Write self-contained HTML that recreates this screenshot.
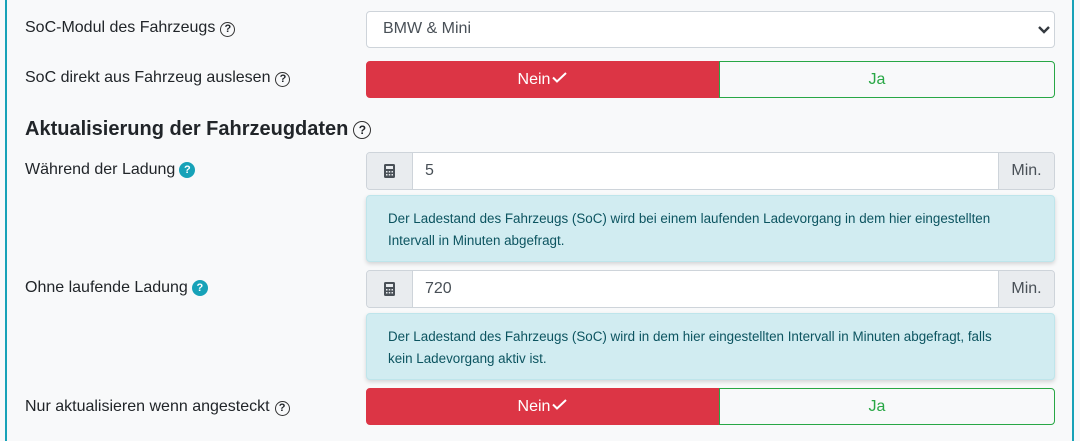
<!DOCTYPE html><html><head><style>
body{margin:0;width:1080px;height:441px;background:#f8f9fa;font-family:"Liberation Sans",sans-serif;color:#212529;position:relative;overflow:hidden}
.b{position:absolute;top:0;bottom:0;width:2px;background:#17a2b8}
.lbl{position:absolute;left:25px;font-size:16px}
.q{display:inline-block;width:13px;height:13px;border:1.8px solid #333;border-radius:50%;font-size:11px;font-weight:bold;text-align:center;line-height:13px;vertical-align:0px;margin-left:5px}
.qi{display:inline-block;width:16px;height:16px;background:#17a2b8;color:#fff;border-radius:50%;font-size:11px;font-weight:bold;text-align:center;line-height:16px;vertical-align:1px;margin-left:4px}
.box{position:absolute;left:366px;width:689px;box-sizing:border-box}
.sel{height:37px;top:11px;background:#fff;border:1px solid #ced4da;border-radius:4px;font-size:16px;padding:8px 16px;color:#495057}
.tog{height:37px;display:flex}
.tog div{text-align:center;line-height:35px;font-size:16px;box-sizing:border-box}
.no{width:353px;background:#dc3545;color:#fff;border:1px solid #dc3545;border-radius:4px 0 0 4px}
.ja{flex:1;border:1px solid #28a745;color:#28a745;border-radius:0 4px 4px 0;background:#f8f9fa;padding-right:20px}
.ig{height:38px;display:flex;border:1px solid #ced4da;border-radius:4px;overflow:hidden;font-size:16px}
.ig .a{width:45px;background:#e9ecef;border-right:1px solid #ced4da;display:flex;align-items:center;justify-content:center}
.ig .i{flex:1;background:#fff;padding:0 12px;line-height:36px;color:#495057}
.ig .m{width:55px;background:#e9ecef;border-left:1px solid #ced4da;text-align:center;line-height:36px;color:#495057}
.al{height:67px;background:#d1ecf1;border:1px solid #bee5eb;border-radius:4px;color:#0c5460;font-size:13.4px;line-height:22px;padding:12px 21px;box-shadow:0 2px 4px rgba(0,0,0,.15);white-space:nowrap}
.ck{vertical-align:1px;margin-left:2px}
</style></head><body>
<div class="b" style="left:5px"></div><div class="b" style="left:1072px"></div>
<div class="lbl" style="top:19px">SoC-Modul des Fahrzeugs<span class="q">?</span></div>
<div class="box sel">BMW &amp; Mini<svg style="position:absolute;right:4px;top:13px" width="12" height="9" viewBox="0 0 12 9"><path d="M1 2l5 5 5-5" stroke="#343a40" stroke-width="2.4" fill="none"/></svg></div>
<div class="lbl" style="top:69px">SoC direkt aus Fahrzeug auslesen<span class="q">?</span></div>
<div class="box tog" style="top:61px"><div class="no">Nein<svg class="ck" width="15" height="11" viewBox="0 0 15 11"><path d="M1 5.5l4 4 9-8.5" stroke="#fff" stroke-width="2" fill="none"/></svg></div><div class="ja">Ja</div></div>
<div class="lbl" style="top:118px;font-size:20px;font-weight:bold">Aktualisierung der Fahrzeugdaten<span class="q" style="width:16px;height:16px;line-height:16px;font-size:12px;vertical-align:1px">?</span></div>
<div class="lbl" style="top:161px">Während der Ladung<span class="qi">?</span></div>
<div class="box ig" style="top:152px"><div class="a"><svg width="11" height="14"><rect width="11" height="14" rx="1.5" fill="#495057"/><rect x="2" y="2" width="7" height="3" fill="#e9ecef"/><g fill="#e9ecef"><rect x="2" y="7" width="1.5" height="1.5"/><rect x="4.75" y="7" width="1.5" height="1.5"/><rect x="7.5" y="7" width="1.5" height="1.5"/><rect x="2" y="10" width="1.5" height="1.5"/><rect x="4.75" y="10" width="1.5" height="1.5"/><rect x="7.5" y="10" width="1.5" height="1.5"/></g></svg></div><div class="i">5</div><div class="m">Min.</div></div>
<div class="box al" style="top:195px">Der Ladestand des Fahrzeugs (SoC) wird bei einem laufenden Ladevorgang in dem hier eingestellten<br>Intervall in Minuten abgefragt.</div>
<div class="lbl" style="top:279px">Ohne laufende Ladung<span class="qi">?</span></div>
<div class="box ig" style="top:270px"><div class="a"><svg width="11" height="14"><rect width="11" height="14" rx="1.5" fill="#495057"/><rect x="2" y="2" width="7" height="3" fill="#e9ecef"/><g fill="#e9ecef"><rect x="2" y="7" width="1.5" height="1.5"/><rect x="4.75" y="7" width="1.5" height="1.5"/><rect x="7.5" y="7" width="1.5" height="1.5"/><rect x="2" y="10" width="1.5" height="1.5"/><rect x="4.75" y="10" width="1.5" height="1.5"/><rect x="7.5" y="10" width="1.5" height="1.5"/></g></svg></div><div class="i">720</div><div class="m">Min.</div></div>
<div class="box al" style="top:313px">Der Ladestand des Fahrzeugs (SoC) wird in dem hier eingestellten Intervall in Minuten abgefragt, falls<br>kein Ladevorgang aktiv ist.</div>
<div class="lbl" style="top:398px">Nur aktualisieren wenn angesteckt<span class="q">?</span></div>
<div class="box tog" style="top:388px"><div class="no">Nein<svg class="ck" width="15" height="11" viewBox="0 0 15 11"><path d="M1 5.5l4 4 9-8.5" stroke="#fff" stroke-width="2" fill="none"/></svg></div><div class="ja">Ja</div></div>
</body></html>
